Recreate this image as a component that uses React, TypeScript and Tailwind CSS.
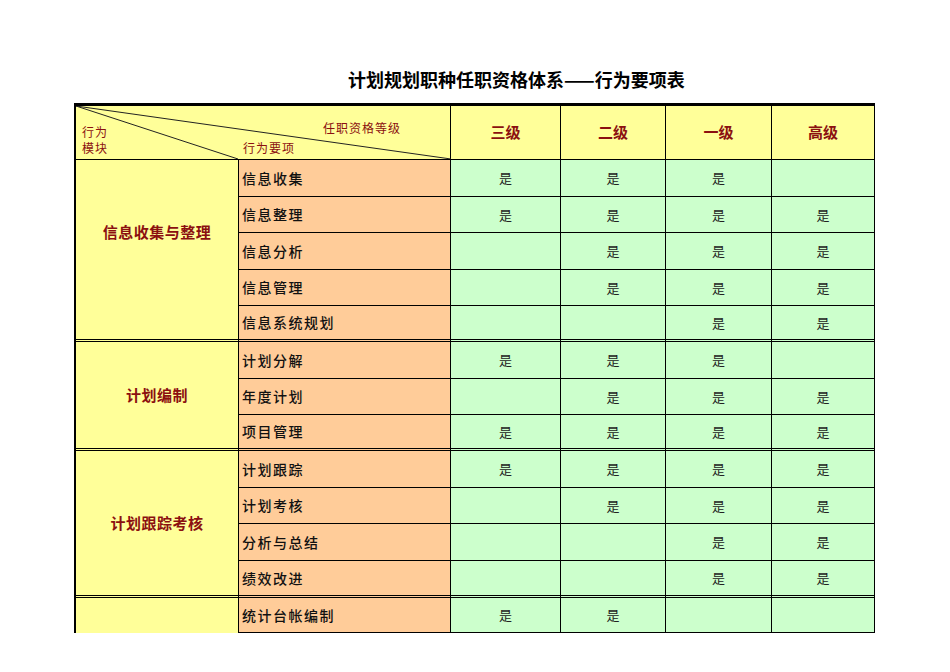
import React from "react";

type Row = { item: string; marks: number[] };

const groups: { name: string; rows: Row[]; lift?: boolean; span: string }[] = [
  {
    name: "信息收集与整理",
    span: "row-span-5",
    lift: true,
    rows: [
      { item: "信息收集", marks: [1, 1, 1, 0] },
      { item: "信息整理", marks: [1, 1, 1, 1] },
      { item: "信息分析", marks: [0, 1, 1, 1] },
      { item: "信息管理", marks: [0, 1, 1, 1] },
      { item: "信息系统规划", marks: [0, 0, 1, 1] },
    ],
  },
  {
    name: "计划编制",
    span: "row-span-3",
    rows: [
      { item: "计划分解", marks: [1, 1, 1, 0] },
      { item: "年度计划", marks: [0, 1, 1, 1] },
      { item: "项目管理", marks: [1, 1, 1, 1] },
    ],
  },
  {
    name: "计划跟踪考核",
    span: "row-span-4",
    rows: [
      { item: "计划跟踪", marks: [1, 1, 1, 1] },
      { item: "计划考核", marks: [0, 1, 1, 1] },
      { item: "分析与总结", marks: [0, 0, 1, 1] },
      { item: "绩效改进", marks: [0, 0, 1, 1] },
    ],
  },
  {
    name: "",
    span: "row-span-1",
    rows: [{ item: "统计台帐编制", marks: [1, 1, 0, 0] }],
  },
];

const levels = ["三级", "二级", "一级", "高级"];

const App = () => {
  return (
    <div
      className="w-[950px] h-[672px] bg-white"
      style={{ fontFamily: '"Noto Sans CJK SC", "Liberation Sans", sans-serif' }}
    >
      <div className="pt-[67px] pl-[348px] h-[92px] text-[18px] leading-[25px] font-bold text-black">
        计划规划职种任职资格体系——行为要项表
      </div>

      <div className="mt-[11px] ml-[74px] w-[801px] border-l-2 border-t-[3px] border-black grid grid-cols-[163px_212px_110px_105px_106px_103px] grid-rows-[54px_37px_36px_37px_36px_36px_37px_36px_36px_37px_36px_37px_37px_35px]">
        {/* diagonal header */}
        <div className="col-span-2 relative bg-[#ffff99] border-r border-b border-black">
          <svg className="absolute inset-0" width="375" height="53">
            <line x1="0" y1="0" x2="162" y2="53" stroke="#222" strokeWidth="1" />
            <line x1="0" y1="0" x2="375" y2="53" stroke="#222" strokeWidth="1" />
          </svg>
          <div className="absolute left-[6px] top-[18px] flex flex-col text-[12px] leading-[16px] text-[#8b1010] tracking-[1px]">
            <span>行为</span>
            <span>模块</span>
          </div>
          <div className="absolute left-[247px] top-[15px] text-[12px] leading-[14px] text-[#8b1010] tracking-[1px]">
            任职资格等级
          </div>
          <div className="absolute left-[167px] top-[35px] text-[12px] leading-[14px] text-[#8b1010] tracking-[1px]">
            行为要项
          </div>
        </div>
        {levels.map((l) => (
          <div
            key={l}
            className="bg-[#ffff99] border-r border-b border-black flex items-center justify-center text-[15px] font-bold text-[#8b1010]"
          >
            {l}
          </div>
        ))}

        {groups.map((g, gi) => {
          const lastGroup = gi === groups.length - 1;
          return (
            <React.Fragment key={gi}>
              <div
                className={`${g.span} col-start-1 bg-[#ffff99] border-r border-black flex items-center justify-center text-[15px] font-bold text-[#8b1010] tracking-[0.5px] ${
                  lastGroup ? "" : "border-b-[3px] border-double"
                } ${g.lift ? "pb-[34px]" : ""}`}
              >
                {g.name}
              </div>
              {g.rows.map((r, ri) => {
                const end = ri === g.rows.length - 1 && !lastGroup;
                const bb = end ? "border-b-[3px] border-double" : "border-b";
                return (
                  <React.Fragment key={r.item}>
                    <div
                      className={`bg-[#ffcc99] border-r border-black ${bb} flex items-center pl-[3px] text-[14px] font-medium tracking-[1.5px] text-[#111]`}
                    >
                      {r.item}
                    </div>
                    {r.marks.map((m, mi) => (
                      <div
                        key={mi}
                        className={`bg-[#ccffcc] border-r border-black ${bb} flex items-center justify-center text-[13px] text-[#222]`}
                      >
                        {m ? "是" : ""}
                      </div>
                    ))}
                  </React.Fragment>
                );
              })}
            </React.Fragment>
          );
        })}
      </div>
    </div>
  );
};

export default App;
